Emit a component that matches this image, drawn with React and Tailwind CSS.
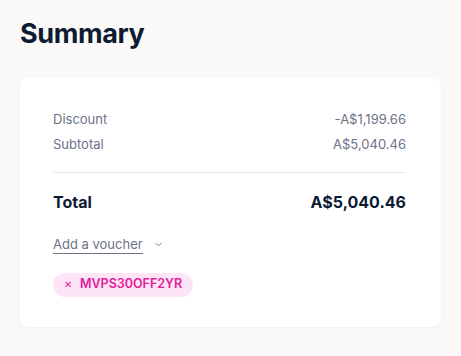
import React from 'react';

const ChevronDown = () => (
    <svg width="11" height="11" viewBox="0 0 24 24" fill="none" stroke="currentColor" strokeWidth="2" strokeLinecap="round" strokeLinejoin="round">
        <path d="M6 9l6 6 6-6" />
    </svg>
);

const Row = ({ label, value }) => (
    <div className="flex justify-between items-center h-5">
        <span>{label}</span>
        <span>{value}</span>
    </div>
);

const App = () => {
    return (
        <div className="min-h-screen bg-[#faf9f7] px-5 pt-[14px] pb-8" style={{ fontFamily: 'Inter, "Noto Sans", sans-serif' }}>
            <h1 className="text-[27px] font-bold text-[#0d1b33] leading-[40px] tracking-[-0.4px]">Summary</h1>
            <div className="mt-[24px] bg-white rounded-lg shadow-[0_1px_3px_rgba(0,0,0,0.04)] pl-[33px] pr-[35px] pt-[32px] pb-[30px]">
                <div className="flex flex-col gap-[5px] text-[13px] text-[#6b7385]">
                    <Row label="Discount" value="-A$1,199.66" />
                    <Row label="Subtotal" value="A$5,040.46" />
                </div>
                <div className="mt-[17px] border-t border-[#e5e6e8]" />
                <div className="mt-[17px] flex justify-between items-center h-6 font-bold text-[#0d1b33]">
                    <span className="text-[16px]">Total</span>
                    <span className="text-[16px]">A$5,040.46</span>
                </div>
                <div className="mt-[20px] flex items-center gap-2 text-[13px] text-[#6b7385] h-5">
                    <span className="border-b border-[#6b7385] leading-[18px]">Add a voucher</span>
                    <span className="ml-[2px]"><ChevronDown /></span>
                </div>
                <div className="mt-[16px]">
                    <span className="inline-flex items-center gap-[8px] h-6 px-[11px] rounded-full bg-[#fde4f6] text-[#e01e9c] text-[12.5px] font-semibold">
                        <span className="text-[10px] font-normal">✕</span>
                        MVPS30OFF2YR
                    </span>
                </div>
            </div>
        </div>
    );
};

export default App;
